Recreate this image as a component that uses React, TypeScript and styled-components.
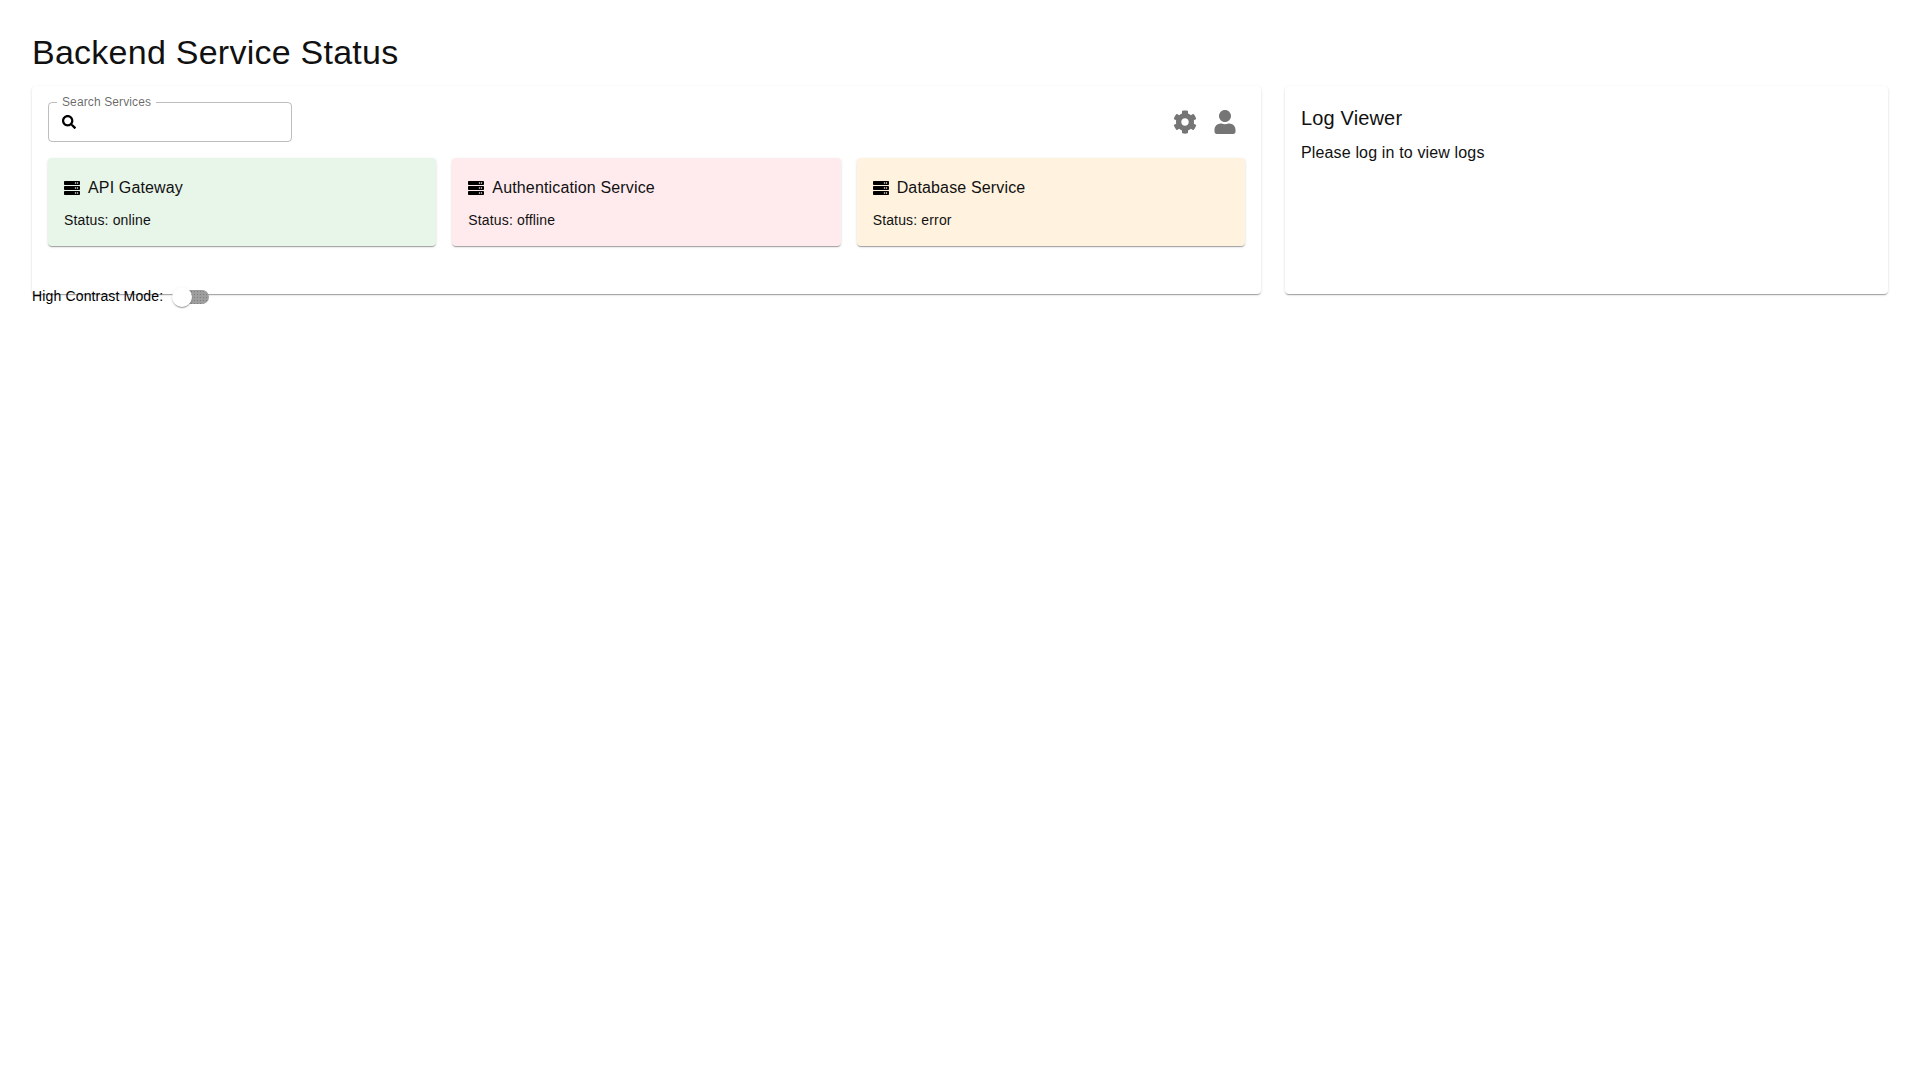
import React from "react";
import styled, { createGlobalStyle } from "styled-components";
import { FaCog, FaSearch, FaServer, FaUser } from "react-icons/fa";

const Global = createGlobalStyle`
  html, body { margin: 0; padding: 0; background: #fff; }
  body { font-family: "Liberation Sans", Arial, sans-serif; color: #111; }
`;

const Page = styled.div`
  padding: 32px 32px 0;
  display: flex;
  flex-direction: column;
`;
const Title = styled.h1`
  margin: 0 0 16px;
  font-size: 34px;
  font-weight: 400;
  line-height: 40px;
  height: 38px;
  letter-spacing: 0.25px;
`;
const Columns = styled.div`
  display: grid;
  grid-template-columns: 1229px 603px;
  gap: 24px;
`;
const Panel = styled.section`
  background: #fff;
  border-radius: 4px;
  height: 208px;
  box-sizing: border-box;
  padding: 16px;
  box-shadow: 0 2px 1px -1px rgba(0,0,0,0.2), 0 1px 1px 0 rgba(0,0,0,0.14), 0 1px 3px 0 rgba(0,0,0,0.12);
`;
const Toolbar = styled.div`
  display: flex;
  align-items: center;
  justify-content: space-between;
  height: 40px;
  margin-bottom: 16px;
`;
const SearchBox = styled.div`
  padding-left: 13px;
  width: 244px;
  height: 40px;
  box-sizing: border-box;
  border: 1px solid rgba(0,0,0,0.26);
  border-radius: 4px;
  position: relative;
  display: flex;
  align-items: center;
  color: #000;
`;
const SearchLegend = styled.label`
  position: absolute;
  left: 8px;
  top: -8px;
  padding: 0 5px;
  background: #fff;
  font-size: 12px;
  line-height: 14px;
  letter-spacing: 0.11px;
  color: rgba(0,0,0,0.6);
`;
const ToolIcons = styled.div`
  display: flex;
  align-items: center;
`;
const ToolButton = styled.button`
  width: 40px;
  height: 40px;
  padding: 8px;
  border: 0;
  background: transparent;
  color: #757575;
  display: flex;
  align-items: center;
  justify-content: center;
`;
const Cards = styled.div`
  display: grid;
  grid-template-columns: repeat(3, 1fr);
  gap: 16px;
`;
const Card = styled.div<{ $bg: string }>`
  background: ${(p) => p.$bg};
  border-radius: 4px;
  height: 88px;
  box-sizing: border-box;
  padding: 16px;
  box-shadow: 0 2px 1px -1px rgba(0,0,0,0.2), 0 1px 1px 0 rgba(0,0,0,0.14), 0 1px 3px 0 rgba(0,0,0,0.12);
`;
const CardHead = styled.div`
  display: flex;
  align-items: center;
  gap: 8px;
  font-size: 16px;
  line-height: 28px;
  letter-spacing: 0.15px;
  margin-bottom: 8px;
  svg { color: #000; flex: none; }
`;
const CardStatus = styled.div`
  font-size: 14px;
  line-height: 20px;
  letter-spacing: 0.15px;
`;
const LogTitle = styled.h2`
  margin: 2px 0 9px;
  font-size: 20px;
  font-weight: 400;
  line-height: 28px;
  letter-spacing: 0.15px;
`;
const LogText = styled.p`
  margin: 0;
  font-size: 16px;
  line-height: 24px;
  letter-spacing: 0.15px;
`;
const ContrastRow = styled.div`
  display: flex;
  align-items: center;
  margin-top: -11px;
  height: 26px;
  font-size: 14px;
  letter-spacing: 0.15px;
  color: #000;
`;
const SwitchWrap = styled.span`
  position: relative;
  width: 34px;
  height: 14px;
  margin-left: 12px;
  top: 1px;
  display: inline-block;
`;
const Track = styled.span`
  position: absolute;
  inset: 0;
  background-color: #9e9e9e;
  background-image: radial-gradient(circle, #7d7d7d 0.6px, transparent 0.8px);
  background-size: 3px 3px;
  border-radius: 7px;
`;
const Thumb = styled.span`
  position: absolute;
  left: -3px;
  top: -3px;
  width: 20px;
  height: 20px;
  border-radius: 50%;
  background: #fff;
  box-shadow: 0 2px 1px -1px rgba(0,0,0,0.2), 0 1px 1px 0 rgba(0,0,0,0.14), 0 1px 3px 0 rgba(0,0,0,0.12);
`;

const services = [
  { name: "API Gateway", status: "online", bg: "#e8f5e9" },
  { name: "Authentication Service", status: "offline", bg: "#ffebee" },
  { name: "Database Service", status: "error", bg: "#fff3e0" },
];

export default function App() {
  return (
    <Page>
      <Global />
      <Title>Backend Service Status</Title>
      <Columns>
        <Panel>
          <Toolbar>
            <SearchBox>
              <SearchLegend>Search Services</SearchLegend>
              <FaSearch size={14} />
            </SearchBox>
            <ToolIcons>
              <ToolButton><FaCog size={24} /></ToolButton>
              <ToolButton><FaUser size={24} /></ToolButton>
            </ToolIcons>
          </Toolbar>
          <Cards>
            {services.map((s) => (
              <Card key={s.name} $bg={s.bg}>
                <CardHead><FaServer size={16} />{s.name}</CardHead>
                <CardStatus>Status: {s.status}</CardStatus>
              </Card>
            ))}
          </Cards>
        </Panel>
        <Panel>
          <LogTitle>Log Viewer</LogTitle>
          <LogText>Please log in to view logs</LogText>
        </Panel>
      </Columns>
      <ContrastRow>
        High Contrast Mode:
        <SwitchWrap><Track /><Thumb /></SwitchWrap>
      </ContrastRow>
    </Page>
  );
}
